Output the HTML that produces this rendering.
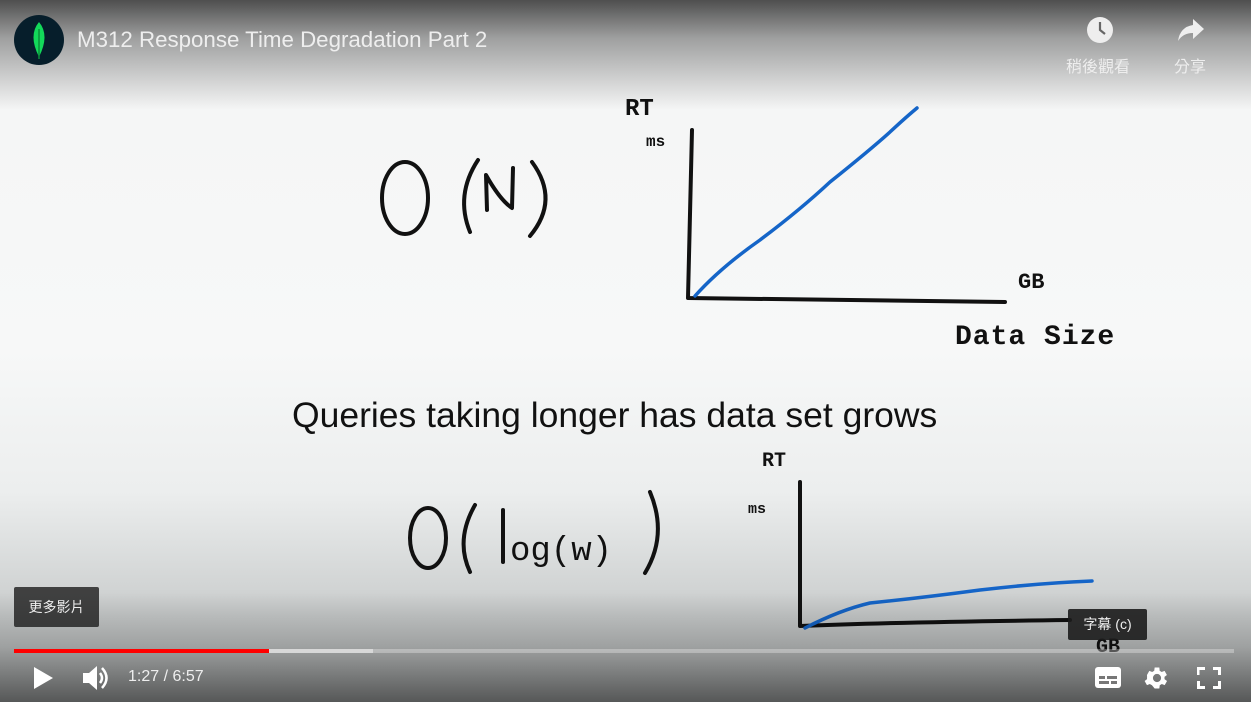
<!DOCTYPE html>
<html><head><meta charset="utf-8"><style>
html,body{margin:0;padding:0;width:1251px;height:702px;overflow:hidden;font-family:"Liberation Sans","Noto Sans CJK TC",sans-serif}
#v{position:absolute;left:0;top:0;width:1251px;height:702px;background:linear-gradient(180deg,#f4f5f5 0%,#f7f8f8 50%,#eceeee 70%,#c9cccc 88%,#bfc2c2 100%)}
#top{position:absolute;left:0;top:0;width:1251px;height:110px;background:linear-gradient(180deg,rgba(0,0,0,.68) 0%,rgba(0,0,0,.35) 35%,rgba(0,0,0,0) 100%)}
#bot{position:absolute;left:0;bottom:0;width:1251px;height:110px;background:linear-gradient(0deg,rgba(0,0,0,.55) 0%,rgba(0,0,0,.2) 50%,rgba(0,0,0,0) 100%)}
.t{position:absolute;color:#eee}
</style></head><body>
<div id="v">
<svg width="1251" height="702" style="position:absolute;left:0;top:0" fill="none" stroke="#111" stroke-width="4" stroke-linecap="round" stroke-linejoin="round">
<ellipse cx="405" cy="198" rx="23" ry="36"/>
<path d="M478 160 Q455 195 470 232"/>
<path d="M487 210 L486 175 Q500 200 512 208 L513 168"/>
<path d="M532 162 Q560 200 530 236"/>
<path d="M692 130 L688 298 L1005 302"/>
<path d="M695 296 Q720 268 760 240 Q800 210 830 182 Q870 150 890 132 Q905 118 917 108" stroke="#1565c8" stroke-width="3.5"/>
<text x="625" y="115" font-family="Liberation Mono" font-size="24" fill="#111" stroke="none" font-weight="bold">RT</text>
<text x="646" y="146" font-family="Liberation Mono" font-size="16" fill="#111" stroke="none" font-weight="bold">ms</text>
<text x="1018" y="288" font-family="Liberation Mono" font-size="22" fill="#111" stroke="none" font-weight="bold">GB</text>
<text x="955" y="344" font-family="Liberation Mono" font-size="28" fill="#111" stroke="none" font-weight="bold" letter-spacing="1">Data Size</text>
<ellipse cx="428" cy="538" rx="18" ry="30"/>
<path d="M475 505 Q455 540 470 572"/>
<path d="M503 510 L503 562"/>
<text x="510" y="560" font-family="Liberation Mono" font-size="34" fill="#111" stroke="none">og(w)</text>
<path d="M650 492 Q668 535 645 573"/>
<path d="M800 482 L800 626 Q900 622 1070 620"/>
<path d="M805 628 Q840 610 870 603 Q920 598 980 590 Q1040 583 1092 581" stroke="#1565c8" stroke-width="3.5"/>
<text x="762" y="466" font-family="Liberation Mono" font-size="20" fill="#111" stroke="none" font-weight="bold">RT</text>
<text x="748" y="513" font-family="Liberation Mono" font-size="15" fill="#111" stroke="none" font-weight="bold">ms</text>
<text x="1096" y="652" font-family="Liberation Mono" font-size="20" fill="#111" stroke="none" font-weight="bold">GB</text>
</svg>
<div style="position:absolute;left:292px;top:395px;font-size:35.5px;color:#111">Queries taking longer has data set grows</div>
</div>
<div id="top"></div>
<div id="bot"></div>
<div style="position:absolute;left:14px;top:15px;width:50px;height:50px;border-radius:50%;background:#061e2b"></div>
<svg style="position:absolute;left:14px;top:15px" width="50" height="50"><path d="M25 7 Q36 20 25 42 Q14 20 25 7Z" fill="#13d95a"/><path d="M25 14 L25 44" stroke="#0b8f3a" stroke-width="1.5"/></svg>
<div class="t" style="left:77px;top:27px;font-size:22.3px;color:#eee">M312 Response Time Degradation Part 2</div>
<svg style="position:absolute;left:1086px;top:16px" width="28" height="28"><circle cx="14" cy="14" r="13" fill="#eee"/><path d="M14 6 V14 L19 18" stroke="#666" stroke-width="2.2" fill="none"/></svg>
<div class="t" style="left:1066px;top:53px;font-size:16px">稍後觀看</div>
<svg style="position:absolute;left:1176px;top:16px" width="30" height="28"><path d="M17 3 L28 13 L17 23 V17 Q7 17 2 25 Q4 11 17 9Z" fill="#eee"/></svg>
<div class="t" style="left:1174px;top:53px;font-size:16px">分享</div>
<div style="position:absolute;left:14px;top:587px;width:85px;height:40px;background:rgba(28,28,28,.8);border-radius:2px;color:#eee;font-size:14px;line-height:40px;text-align:center">更多影片</div>
<div style="position:absolute;left:1068px;top:609px;width:79px;height:31px;background:rgba(28,28,28,.9);border-radius:2px;color:#eee;font-size:14px;line-height:31px;text-align:center">字幕 (c)</div>
<div style="position:absolute;left:14px;top:649px;width:1220px;height:4px;background:rgba(255,255,255,.3)"></div>
<div style="position:absolute;left:14px;top:649px;width:359px;height:4px;background:rgba(230,230,230,.7)"></div>
<div style="position:absolute;left:14px;top:649px;width:255px;height:4px;background:#f00"></div>
<svg style="position:absolute;left:33px;top:666px" width="22" height="24"><path d="M1 1 L20 12 L1 23Z" fill="#fff"/></svg>
<svg style="position:absolute;left:82px;top:664px" width="28" height="28"><path d="M1 9 H7 L15 2 V26 L7 19 H1Z" fill="#fff"/><path d="M18 9 Q22 14 18 19" stroke="#fff" stroke-width="2.5" fill="none"/><path d="M20 4 Q29 14 20 24" stroke="#fff" stroke-width="2.5" fill="none"/></svg>
<div class="t" style="left:128px;top:668px;font-size:16px;color:#eee">1:27 / 6:57</div>
<svg style="position:absolute;left:1095px;top:667px" width="28" height="22"><rect x="0" y="0" width="26" height="21" rx="3" fill="#fff"/><rect x="4" y="9" width="6" height="3" fill="#777"/><rect x="12" y="9" width="10" height="3" fill="#777"/><rect x="4" y="14" width="10" height="3" fill="#777"/><rect x="16" y="14" width="6" height="3" fill="#777"/></svg>
<svg style="position:absolute;left:1143px;top:664px" width="28" height="28" viewBox="0 0 24 24"><path fill="#fff" d="M19.4 13a7.5 7.5 0 000-2l2.1-1.6-2-3.5-2.5 1a7 7 0 00-1.7-1L15 3h-4l-.4 2.9a7 7 0 00-1.7 1l-2.5-1-2 3.5L4.5 11a7.5 7.5 0 000 2l-2.1 1.6 2 3.5 2.5-1a7 7 0 001.7 1L11 21h4l.4-2.9a7 7 0 001.7-1l2.5 1 2-3.5zM13 15.5a3.5 3.5 0 110-7 3.5 3.5 0 010 7z" transform="translate(-1 0)"/></svg>
<svg style="position:absolute;left:1197px;top:667px" width="24" height="22" fill="none" stroke="#fff" stroke-width="3"><path d="M1 8 V1.5 H8 M16 1.5 H22.5 V8 M22.5 14 V20.5 H16 M8 20.5 H1.5 V14"/></svg>
</body></html>
